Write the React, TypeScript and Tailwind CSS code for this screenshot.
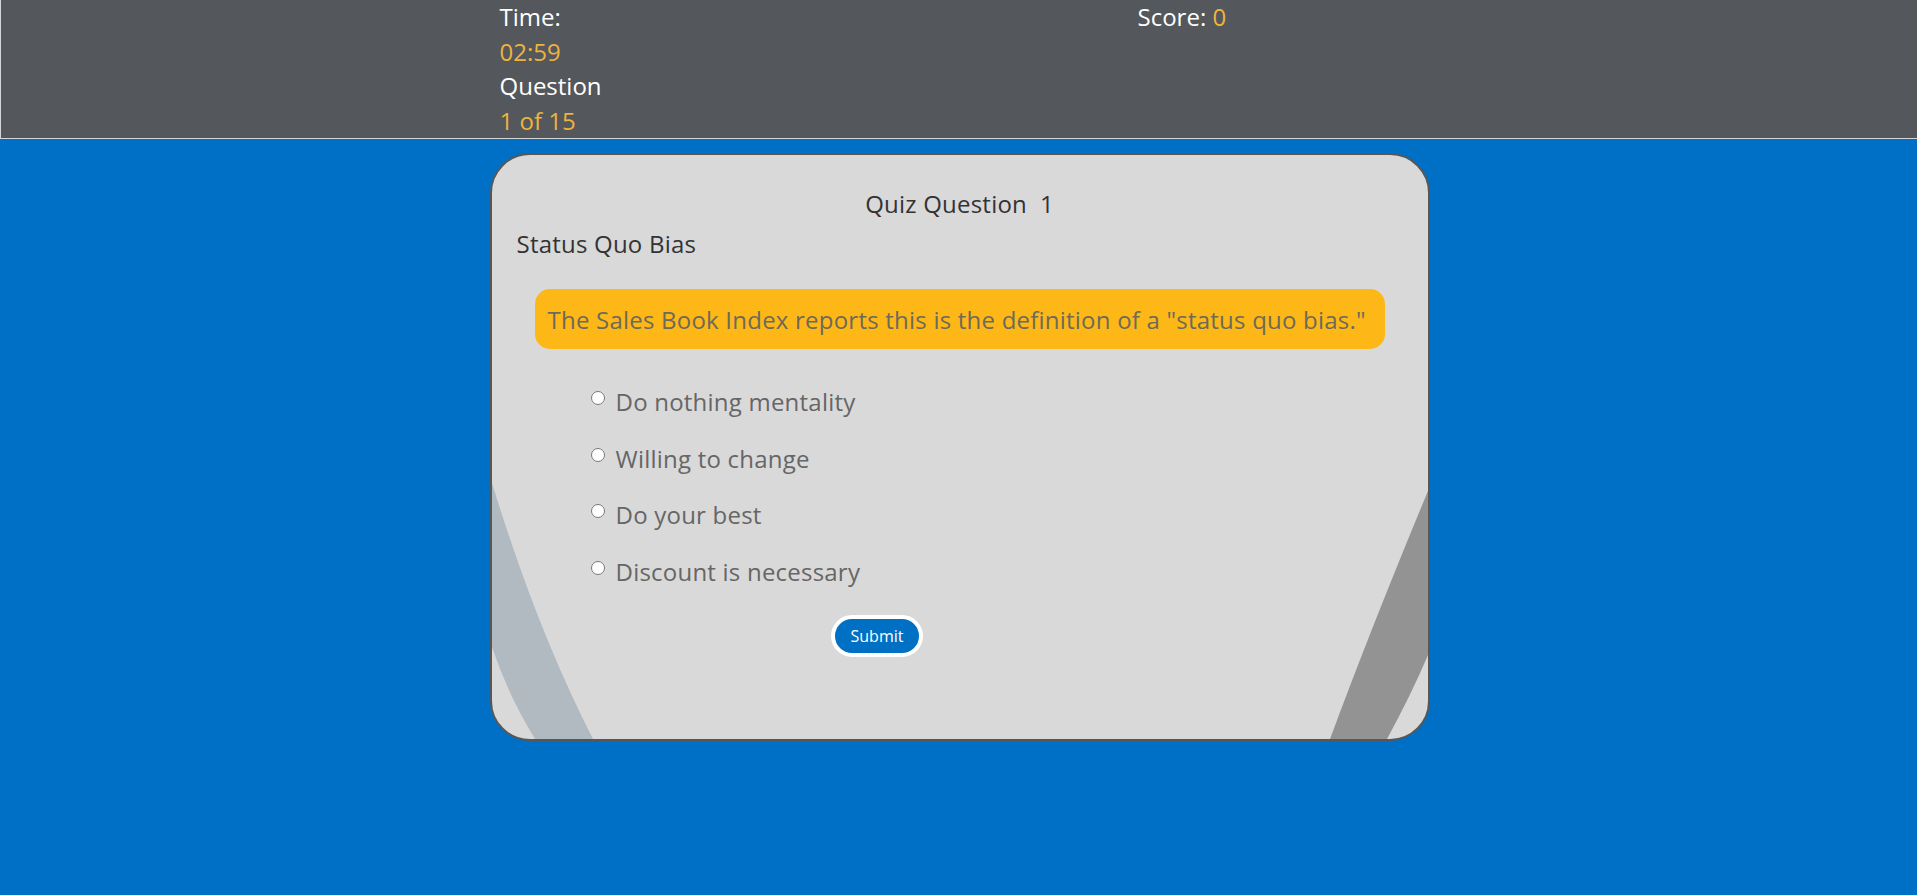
import { useState } from "react";

const options = [
  "Do nothing mentality",
  "Willing to change",
  "Do your best",
  "Discount is necessary",
];

const QuizHeader = () => {
  return (
    <header className="h-[139px] bg-[#54575c] border-b border-l border-[#d4d6d8] text-white pl-[1px]">
      <div className="mx-auto w-[940px] flex text-[24px] leading-[34.5px]">
        {/* Time + question counter */}
        <div className="w-[648px] pl-[10px]">
          <div>Time:</div>
          <div className="text-[#ecb43c]">02:59</div>
          <div>Question</div>
          <div className="text-[#ecb43c]">1 of 15</div>
        </div>
        {/* Score */}
        <div>
          Score: <span className="text-[#ecb43c]">0</span>
        </div>
      </div>
    </header>
  );
};

const CardBands = () => {
  // decorative curved stripes behind the quiz card
  return (
    <svg
      className="absolute inset-0 w-full h-full"
      viewBox="0 0 936 584"
      preserveAspectRatio="none"
    >
      <path d="M0,328 Q45,475 101,584 L43,584 Q16,540 0,492 Z" fill="#b1b9c1" />
      <path d="M936,336 Q881,468 838,584 L895,584 Q919,540 936,500 Z" fill="#939393" />
    </svg>
  );
};

const QuizCard = () => {
  const [answer, setAnswer] = useState<string | null>(null);

  return (
    <div className="pl-[2px] pt-[14px]">
      <section className="relative mx-auto w-[940px] h-[588px] rounded-[40px] border-2 border-[#555759] bg-[#d9d9d9] overflow-hidden">
        <CardBands />

        <div className="relative pt-[32px] text-[24px] leading-[33px] tracking-[0.22px]">
          <h2 className="text-center text-[#333] whitespace-pre">Quiz Question  1</h2>
          <h3 className="mt-[7px] pl-[25px] text-[#333]">Status Quo Bias</h3>

          {/* Prompt */}
          <div className="mt-[29px] mx-[43px] rounded-[15px] bg-[#fdb818] py-[13.5px] pl-[13px] text-[#6d6a5a]">
            The Sales Book Index reports this is the definition of a "status quo bias."
          </div>

          {/* Answers */}
          <div className="mt-[36px] pl-[99px] flex flex-col gap-[23.7px]">
            {options.map((opt) => (
              <label key={opt} className="flex items-start text-[#666] cursor-pointer">
                <input
                  type="radio"
                  name="answer"
                  checked={answer === opt}
                  onChange={() => setAnswer(opt)}
                  className="mt-[6px] mr-[11px] w-[14px] h-[14px]"
                />
                <span>{opt}</span>
              </label>
            ))}
          </div>

          <div className="mt-[27px] pl-[339px]">
            <button className="rounded-full border-4 border-white bg-[#0070c4] px-[16px] h-[42px] text-[16px] leading-[20px] tracking-normal text-white">
              Submit
            </button>
          </div>
        </div>
      </section>
    </div>
  );
};

export default function App() {
  return (
    <div
      className="min-h-screen bg-[#0070c6]"
      style={{ fontFamily: '"Open Sans", sans-serif' }}
    >
      <QuizHeader />
      <QuizCard />
    </div>
  );
}
